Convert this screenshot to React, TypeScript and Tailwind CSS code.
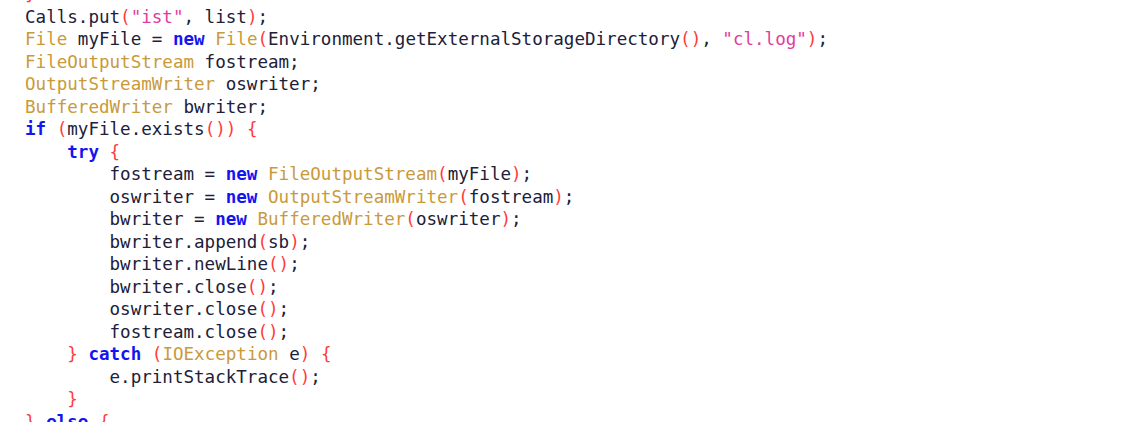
import React from "react";

type Tok = [string, string];

const T = "text-[#c99a3a]"; // types
const K = "text-[#1414f0] font-bold"; // keywords
const S = "text-[#e23c9e]"; // strings
const P = "text-[#ff3b3b]"; // brackets
const D = "text-[#20203a]"; // default

const lines: { indent: number; toks: Tok[] }[] = [
  { indent: 0, toks: [["}", P]] },
  { indent: 0, toks: [["Calls.put", D], ["(", P], ['"ist"', S], [", list", D], [")", P], [";", D]] },
  {
    indent: 0,
    toks: [
      ["File", T], [" myFile = ", D], ["new", K], [" ", D], ["File", T], ["(", P],
      ["Environment.getExternalStorageDirectory", D], ["()", P], [", ", D], ['"cl.log"', S], [")", P], [";", D],
    ],
  },
  { indent: 0, toks: [["FileOutputStream", T], [" fostream;", D]] },
  { indent: 0, toks: [["OutputStreamWriter", T], [" oswriter;", D]] },
  { indent: 0, toks: [["BufferedWriter", T], [" bwriter;", D]] },
  { indent: 0, toks: [["if", K], [" ", D], ["(", P], ["myFile.exists", D], ["())", P], [" ", D], ["{", P]] },
  { indent: 4, toks: [["try", K], [" ", D], ["{", P]] },
  { indent: 8, toks: [["fostream = ", D], ["new", K], [" ", D], ["FileOutputStream", T], ["(", P], ["myFile", D], [")", P], [";", D]] },
  { indent: 8, toks: [["oswriter = ", D], ["new", K], [" ", D], ["OutputStreamWriter", T], ["(", P], ["fostream", D], [")", P], [";", D]] },
  { indent: 8, toks: [["bwriter = ", D], ["new", K], [" ", D], ["BufferedWriter", T], ["(", P], ["oswriter", D], [")", P], [";", D]] },
  { indent: 8, toks: [["bwriter.append", D], ["(", P], ["sb", D], [")", P], [";", D]] },
  { indent: 8, toks: [["bwriter.newLine", D], ["()", P], [";", D]] },
  { indent: 8, toks: [["bwriter.close", D], ["()", P], [";", D]] },
  { indent: 8, toks: [["oswriter.close", D], ["()", P], [";", D]] },
  { indent: 8, toks: [["fostream.close", D], ["()", P], [";", D]] },
  { indent: 4, toks: [["}", P], [" ", D], ["catch", K], [" ", D], ["(", P], ["IOException", T], [" e", D], [")", P], [" ", D], ["{", P]] },
  { indent: 8, toks: [["e.printStackTrace", D], ["()", P], [";", D]] },
  { indent: 4, toks: [["}", P]] },
  { indent: 0, toks: [["}", P], [" ", D], ["else", K], [" ", D], ["{", P]] },
];

export default function App() {
  return (
    <div className="w-[1140px] h-[422px] overflow-hidden bg-white">
      <div
        className="mt-[-16.75px] pl-[25px] text-[17.56px] leading-[22.5px] whitespace-pre"
        style={{ fontFamily: '"DejaVu Sans Mono", "Liberation Mono", monospace' }}
      >
        {lines.map((l, i) => (
          <div key={i}>
            {" ".repeat(l.indent)}
            {l.toks.map(([t, c], j) => (
              <span key={j} className={c}>
                {t}
              </span>
            ))}
          </div>
        ))}
      </div>
    </div>
  );
}
